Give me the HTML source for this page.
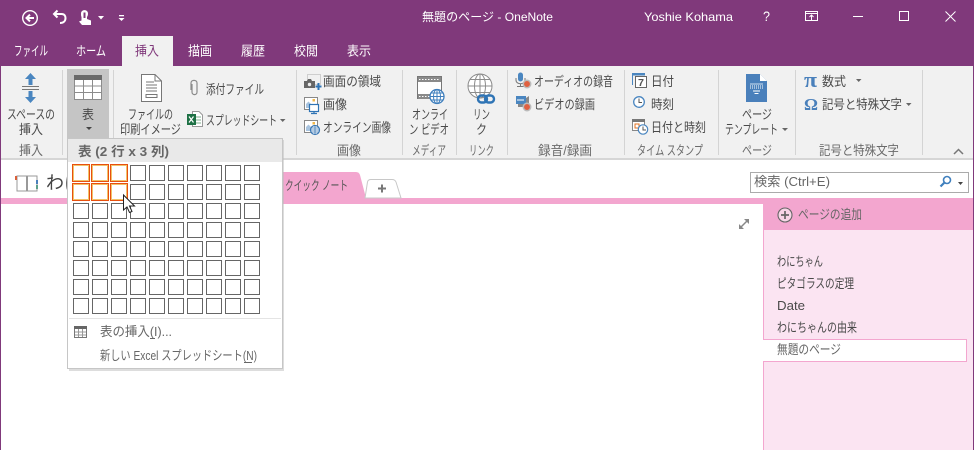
<!DOCTYPE html>
<html lang="ja"><head><meta charset="utf-8"><title>OneNote</title>
<style>
html,body{margin:0;padding:0;background:#fff;width:974px;height:450px;overflow:hidden}
svg{display:block}
text{font-family:"Liberation Sans","Noto Sans CJK JP",sans-serif;font-size:13px;fill:#4a4a4a}
.t{fill:#fff}
.g{fill:#6a6a6a}
.l{font-size:12px}
</style></head><body>
<svg width="974" height="450" viewBox="0 0 974 450" xmlns="http://www.w3.org/2000/svg">
<defs>
<g id="row" fill="#fff" stroke="#666" stroke-width="1">
<rect x="73.500" y=".5" width="15" height="15"/><rect x="92.500" y=".5" width="15" height="15"/><rect x="111.500" y=".5" width="15" height="15"/><rect x="130.500" y=".5" width="15" height="15"/><rect x="149.500" y=".5" width="15" height="15"/><rect x="168.500" y=".5" width="15" height="15"/><rect x="187.500" y=".5" width="15" height="15"/><rect x="206.500" y=".5" width="15" height="15"/><rect x="225.500" y=".5" width="15" height="15"/><rect x="244.500" y=".5" width="15" height="15"/>
</g>
</defs>
<rect width="974" height="450" fill="#fff"/>
<rect width="974" height="66" fill="#80397b"/>
<rect x="0" y="66" width="974" height="93" fill="#f1f1f1"/>
<rect x="0" y="158" width="974" height="2" fill="#d6d6d6"/>
<rect x="122" y="36" width="51" height="31" fill="#f1f1f1"/>
<rect x="0" y="0" width="1" height="450" fill="#80397b"/>
<rect x="973" y="0" width="1" height="450" fill="#80397b"/>

<!-- QAT -->
<circle cx="30" cy="18" r="7.3" fill="none" stroke="#fff" stroke-width="1.4"/>
<path d="M34 18H27M30 14.6L26.5 18L30 21.4" fill="none" stroke="#fff" stroke-width="2"/>
<path d="M54 14H61.5C64.5 14 65.5 16 65.5 18C65.5 21 63.5 23 60 23M57.5 10.5L54 14L57.5 17.5" fill="none" stroke="#fff" stroke-width="2"/>
<path d="M81 13.5C81 9 88 9 88 13.5C88 15.5 87.5 16 87 17V19L91 20.5V25H82L79 21.5L81.5 20.5V17C81 16 81 15 81 13.5Z" fill="#fff"/>
<path d="M83.5 12.500H85.500V18H83.500Z" fill="#80397b"/>
<path d="M98 16H104L101 19.500Z" fill="#fff"/>
<rect x="119" y="15" width="5" height="1.300" fill="#fff"/><path d="M118.500 18H124.500L121.500 21Z" fill="#fff"/>

<!-- Title bar -->
<text class="t l" x="422" y="21" textLength="131" lengthAdjust="spacingAndGlyphs">無題のページ - OneNote</text>
<text class="t l" x="644" y="21" textLength="89" lengthAdjust="spacingAndGlyphs">Yoshie Kohama</text>
<text class="t" x="763" y="21" textLength="7" lengthAdjust="spacingAndGlyphs" style="font-size:14px">?</text>
<rect x="805.500" y="11.500" width="12" height="9" fill="none" stroke="#fff"/>
<path d="M805 13.500H818M811.500 20V15M809.500 17L811.500 15L813.500 17" fill="none" stroke="#fff"/>
<rect x="853" y="16" width="10" height="1" fill="#fff"/>
<rect x="899.500" y="11.500" width="9" height="9" fill="none" stroke="#fff" stroke-width="1"/>
<path d="M945.500 11.500L955.500 21.500M955.500 11.500L945.500 21.500" stroke="#fff" fill="none"/>

<!-- Tabs -->
<text class="t" x="14" y="55.500" textLength="34" lengthAdjust="spacingAndGlyphs">ファイル</text>
<text class="t" x="76" y="55.500" textLength="30" lengthAdjust="spacingAndGlyphs">ホーム</text>
<text x="135" y="55.500" textLength="24" lengthAdjust="spacingAndGlyphs" style="fill:#80397b">挿入</text>
<text class="t" x="188" y="55.500" textLength="24" lengthAdjust="spacingAndGlyphs">描画</text>
<text class="t" x="241" y="55.500" textLength="24" lengthAdjust="spacingAndGlyphs">履歴</text>
<text class="t" x="294" y="55.500" textLength="24" lengthAdjust="spacingAndGlyphs">校閲</text>
<text class="t" x="347" y="55.500" textLength="24" lengthAdjust="spacingAndGlyphs">表示</text>

<!-- Ribbon separators -->
<g fill="#d4d4d4">
<rect x="62" y="70" width="1" height="85"/><rect x="113" y="70" width="1" height="85"/>
<rect x="296" y="70" width="1" height="85"/><rect x="402" y="70" width="1" height="85"/>
<rect x="456" y="70" width="1" height="85"/><rect x="507" y="70" width="1" height="85"/>
<rect x="624" y="70" width="1" height="85"/><rect x="718" y="70" width="1" height="85"/>
<rect x="795" y="70" width="1" height="85"/><rect x="922" y="70" width="1" height="85"/>
</g>

<!-- Group labels -->
<text class="g" x="19" y="155" textLength="24" lengthAdjust="spacingAndGlyphs">挿入</text>
<text class="g" x="337" y="155" textLength="24" lengthAdjust="spacingAndGlyphs">画像</text>
<text class="g" x="412" y="155" textLength="34" lengthAdjust="spacingAndGlyphs">メディア</text>
<text class="g" x="469" y="155" textLength="25" lengthAdjust="spacingAndGlyphs">リンク</text>
<text class="g" x="538" y="155" textLength="54" lengthAdjust="spacingAndGlyphs">録音/録画</text>
<text class="g" x="637" y="155" textLength="66" lengthAdjust="spacingAndGlyphs">タイム スタンプ</text>
<text class="g" x="742" y="155" textLength="30" lengthAdjust="spacingAndGlyphs">ページ</text>
<text class="g" x="819" y="155" textLength="80" lengthAdjust="spacingAndGlyphs">記号と特殊文字</text>
<path d="M954 154L958.500 149.500L963 154" fill="none" stroke="#777" stroke-width="1.500"/>

<!-- Space -->
<path d="M30.500 73L36 79H32.500V85H28.500V79H25Z" fill="#4a86c0"/>
<path d="M30.500 103L36 97H32.500V91H28.500V97H25Z" fill="#4a86c0"/>
<rect x="22" y="86" width="17" height="1" fill="#777"/><rect x="22" y="89" width="17" height="1" fill="#777"/>
<text x="7" y="119" textLength="48" lengthAdjust="spacingAndGlyphs">スペースの</text>
<text x="19" y="134" textLength="24" lengthAdjust="spacingAndGlyphs">挿入</text>

<!-- Table button -->
<rect x="67" y="69" width="42" height="70" fill="#c5c5c5"/>
<rect x="74" y="75" width="28" height="25" fill="#fff"/>
<rect x="74" y="75" width="28" height="5" fill="#6a6a6a"/>
<path d="M74.500 80V99.500H101.500V80M74 86H102M74 92.500H102M83.500 80V100M92.500 80V100" fill="none" stroke="#8c8c8c"/>
<text x="82" y="119" textLength="12" lengthAdjust="spacingAndGlyphs">表</text>
<path d="M86 127H92L89 130Z" fill="#444"/>

<!-- File printout -->
<path d="M141.500 74.500H155L161.500 81V101.500H141.500Z" fill="#fff" stroke="#777"/>
<path d="M155 74.500V81H161.500" fill="none" stroke="#777"/>
<path d="M146 82H154M146 85H157M146 88H157M146 91H157" stroke="#777"/>
<rect x="146" y="94.500" width="11" height="3" fill="#fff" stroke="#777"/>
<text x="128" y="119" textLength="45" lengthAdjust="spacingAndGlyphs">ファイルの</text>
<text x="120" y="134" textLength="61" lengthAdjust="spacingAndGlyphs">印刷イメージ</text>

<!-- Attach -->
<path d="M192 84V92C192 95.500 197 95.500 197 92V83C197 79.500 191 79.500 191 83V90" fill="none" stroke="#8a8a8a" stroke-width="1.200"/>
<text x="206" y="94" textLength="58" lengthAdjust="spacingAndGlyphs">添付ファイル</text>

<!-- Spreadsheet -->
<path d="M192.500 111.500H199L202.500 115V126.500H192.500Z" fill="#fff" stroke="#999"/>
<path d="M196 117H201M196 120H201M196 123H201" stroke="#7fb08f"/>
<rect x="187" y="114" width="9" height="11" fill="#1e7145"/>
<path d="M189 116.500L193.500 122.500M193.500 116.500L189 122.500" stroke="#fff" stroke-width="1.200"/>
<text x="206" y="125" textLength="71" lengthAdjust="spacingAndGlyphs">スプレッドシート</text>
<path d="M280 119H285.500L282.700 122Z" fill="#666"/>

<!-- Images group -->
<rect x="307.500" y="74.500" width="13" height="10" fill="none" stroke="#aaa" stroke-dasharray="1 1"/>
<path d="M304 81H307L308 79H311L312 81H315V88H304Z" fill="#666"/>
<circle cx="309.500" cy="84.500" r="1.700" fill="#eee"/>
<path d="M318.500 83V90M315.500 86.500H321.500" stroke="#2f74b5" stroke-width="2" fill="none"/>
<rect x="304.500" y="97.500" width="13" height="12" fill="#fff" stroke="#888"/>
<path d="M306 108V104L308.500 101.500L311 104V108Z" fill="#a9c4df"/>
<rect x="312.500" y="99" width="2.500" height="2.500" fill="#f2b84b"/>
<rect x="309.500" y="104.500" width="9" height="7" fill="#fff" stroke="#2f74b5" stroke-width="1.200"/>
<path d="M314 111.500V113M311 113.500H317" stroke="#2f74b5" stroke-width="1.200"/>
<rect x="304.500" y="120.500" width="13" height="12" fill="#fff" stroke="#888"/>
<path d="M306 131V127L308.500 124.500L311 127V131Z" fill="#a9c4df"/>
<rect x="312.500" y="122" width="2.500" height="2.500" fill="#f2b84b"/>
<circle cx="315" cy="130" r="4.500" fill="#fff" stroke="#3b78b5" stroke-width="1.200"/>
<path d="M310.500 130H319.500M315 125.500V134.500M311 128H319M311 132H319" stroke="#3b78b5" stroke-width=".8"/>
<text x="323" y="86" textLength="58" lengthAdjust="spacingAndGlyphs">画面の領域</text>
<text x="323" y="109" textLength="24" lengthAdjust="spacingAndGlyphs">画像</text>
<text x="323" y="132" textLength="68" lengthAdjust="spacingAndGlyphs">オンライン画像</text>

<!-- Video -->
<rect x="417.500" y="76.500" width="24" height="22" fill="#fff" stroke="#777"/>
<rect x="418" y="77" width="23" height="5" fill="#8a8a8a"/><rect x="418" y="94" width="23" height="5" fill="#8a8a8a"/>
<path d="M419 79.500H440M419 96.500H440" stroke="#fff" stroke-dasharray="1.500 1.500"/>
<circle cx="437" cy="96.500" r="7" fill="#fff" stroke="#3f7fbd" stroke-width="1.300"/>
<path d="M430 96.500H444M437 89.500V103.500M431.500 93H442.500M431.500 100H442.500" stroke="#3f7fbd"/>
<ellipse cx="437" cy="96.500" rx="3.500" ry="7" fill="none" stroke="#3f7fbd"/>
<text x="412" y="119" textLength="36" lengthAdjust="spacingAndGlyphs">オンライ</text>
<text x="409" y="134" textLength="40" lengthAdjust="spacingAndGlyphs">ン ビデオ</text>

<!-- Link -->
<circle cx="480" cy="86" r="12" fill="#fff" stroke="#8c8c8c"/>
<ellipse cx="480" cy="86" rx="5.500" ry="12" fill="none" stroke="#8c8c8c"/>
<path d="M480 74V98M468 86H492M470 79.500H490M470 92.500H490" stroke="#8c8c8c"/>
<rect x="478" y="95.500" width="9" height="7" rx="3.500" fill="none" stroke="#2f74b5" stroke-width="2.400"/>
<rect x="485" y="95.500" width="9" height="7" rx="3.500" fill="none" stroke="#2f74b5" stroke-width="2.400"/>
<text x="473" y="119" textLength="17" lengthAdjust="spacingAndGlyphs">リン</text>
<text x="476" y="134" textLength="11" lengthAdjust="spacingAndGlyphs">ク</text>

<!-- Audio/video -->
<rect x="518" y="72.500" width="5" height="9" rx="2.500" fill="#4a86c0"/>
<path d="M516 78V80C516 85 525 85 525 80V78M520.500 84V86M517 86.500H524" fill="none" stroke="#777"/>
<circle cx="527" cy="84" r="3.700" fill="#e06040" stroke="#bbb" stroke-width="1.500"/>
<rect x="516" y="96" width="10" height="8" fill="#4a86c0"/>
<path d="M517 100H524" stroke="#fff"/>
<path d="M526 98L529 96V104H526Z" fill="#888"/>
<rect x="518" y="104" width="6" height="3" fill="#888"/>
<circle cx="527" cy="107" r="3.700" fill="#e06040" stroke="#bbb" stroke-width="1.500"/>
<text x="534" y="86" textLength="79" lengthAdjust="spacingAndGlyphs">オーディオの録音</text>
<text x="534" y="109" textLength="61" lengthAdjust="spacingAndGlyphs">ビデオの録画</text>

<!-- Date/time -->
<path d="M632.500 85V73.500H644" fill="none" stroke="#4a86c0"/>
<rect x="632" y="73" width="13" height="2.500" fill="#4a86c0"/>
<rect x="635.500" y="76.500" width="11" height="11" fill="#fff" stroke="#666"/>
<text x="638" y="86" textLength="6" lengthAdjust="spacingAndGlyphs" style="font-size:10px;font-weight:bold;fill:#555">7</text>
<circle cx="639" cy="102" r="5.300" fill="#fff" stroke="#4a86c0" stroke-width="1.300"/>
<path d="M639 98.500V102.500H642" fill="none" stroke="#555"/>
<rect x="632.500" y="119.500" width="12" height="11" fill="#fff" stroke="#888"/>
<rect x="632" y="119" width="13" height="3" fill="#777"/>
<rect x="635" y="124" width="4" height="4" fill="#fff" stroke="#e07020"/>
<circle cx="643" cy="129.500" r="4.700" fill="#fff" stroke="#4a86c0" stroke-width="1.200"/>
<path d="M643 126.500V130H646" fill="none" stroke="#555"/>
<text x="651" y="86" textLength="23" lengthAdjust="spacingAndGlyphs">日付</text>
<text x="651" y="109" textLength="23" lengthAdjust="spacingAndGlyphs">時刻</text>
<text x="651" y="132" textLength="55" lengthAdjust="spacingAndGlyphs">日付と時刻</text>

<!-- Page template -->
<path d="M746 74H760L767 81V102H746Z" fill="#4a80bb"/>
<path d="M760 74V81H767Z" fill="#fff"/>
<path d="M750 84H763" stroke="#cfe0f0"/>
<path d="M750 86H763M750 88H763" stroke="#fff" stroke-dasharray="1 1"/>
<path d="M753 91H760M754.500 93.500H758.500" stroke="#fff"/>
<text x="742" y="119" textLength="30" lengthAdjust="spacingAndGlyphs">ページ</text>
<text x="725" y="134" textLength="53" lengthAdjust="spacingAndGlyphs">テンプレート</text>
<path d="M782 128H788L785 131Z" fill="#666"/>

<!-- Symbols -->
<text x="804" y="87" textLength="13" lengthAdjust="spacingAndGlyphs" style="font-family:'Liberation Serif',serif;font-size:22px;font-weight:bold;fill:#4a80bb">π</text>
<text x="804" y="110" textLength="14" lengthAdjust="spacingAndGlyphs" style="font-family:'Liberation Serif',serif;font-size:17px;font-weight:bold;fill:#4a80bb">Ω</text>
<text x="822" y="86" textLength="24" lengthAdjust="spacingAndGlyphs">数式</text>
<path d="M856 79H861.500L858.700 82Z" fill="#666"/>
<text x="822" y="109" textLength="80" lengthAdjust="spacingAndGlyphs">記号と特殊文字</text>
<path d="M906 103H911.500L908.700 106Z" fill="#666"/>

<!-- Notebook bar -->
<rect x="1" y="198" width="762" height="6" fill="#f3a6cf"/>
<path d="M17 176H26.500V191H17ZM27.500 176H37V191H27.500Z" fill="#fff" stroke="#999"/>
<rect x="15" y="176" width="2" height="4" fill="#d9603a"/>
<rect x="36" y="180" width="2" height="4" fill="#4a80bb"/><rect x="36" y="185" width="2" height="4" fill="#5ca08a"/>
<text x="46" y="189" textLength="90" lengthAdjust="spacingAndGlyphs" style="font-size:18px;fill:#444">わにちゃん</text>

<path d="M283 172H356Q359 172 360 175L366 198H283Z" fill="#f3a6cf"/>
<text x="285" y="190" textLength="63" lengthAdjust="spacingAndGlyphs" style="fill:#555">クイック ノート</text>
<path d="M365 198L367.500 182Q368 179.500 371 179.500H392Q395 179.500 396 182L401 198Z" fill="#fff" stroke="#c8c8c8"/>
<path d="M378 188.500H386M382 184.500V192.500" stroke="#777" stroke-width="2"/>

<!-- Search -->
<rect x="750.500" y="172.500" width="218" height="20" fill="#fff" stroke="#ababab"/>
<text x="754" y="186" textLength="76" lengthAdjust="spacingAndGlyphs" style="fill:#666">検索 (Ctrl+E)</text>
<circle cx="947" cy="180" r="3.500" fill="none" stroke="#3f7fbd" stroke-width="1.600"/>
<path d="M944.500 182.500L940.500 186.500" stroke="#3f7fbd" stroke-width="2.200"/>
<path d="M958 182H963L960.500 185Z" fill="#444"/>

<!-- Expand icon -->
<path d="M740 228L748 220" stroke="#888" stroke-width="1.500"/>
<path d="M739 224V229H744ZM749 224V219H744Z" fill="#888"/>

<!-- Page pane -->
<rect x="763" y="204" width="210" height="246" fill="#fbe4f2"/>
<rect x="763" y="198" width="210" height="32" fill="#f3a6cf"/>
<rect x="763" y="230" width="1" height="220" fill="#f3a6cf"/>
<circle cx="785" cy="215" r="7" fill="#f7d5e7" stroke="#666" stroke-width="1.100"/>
<path d="M781 215H789M785 211V219" stroke="#666" stroke-width="1.700"/>
<text x="798" y="219" textLength="64" lengthAdjust="spacingAndGlyphs" style="fill:#666">ページの追加</text>
<text x="777" y="266" textLength="46" lengthAdjust="spacingAndGlyphs">わにちゃん</text>
<text x="777" y="288" textLength="77" lengthAdjust="spacingAndGlyphs">ピタゴラスの定理</text>
<text x="777" y="310" textLength="28" lengthAdjust="spacingAndGlyphs">Date</text>
<text x="777" y="332" textLength="80" lengthAdjust="spacingAndGlyphs">わにちゃんの由来</text>
<path d="M763.500 339.500H966.500V361.500H763.500" fill="#fff" stroke="#f3a6cf"/>
<rect x="763" y="340" width="2" height="21" fill="#fff"/>
<text x="777" y="354" textLength="64" lengthAdjust="spacingAndGlyphs" style="fill:#666">無題のページ</text>

<!-- Dropdown -->
<rect x="69" y="140" width="215" height="231" fill="#bbb" opacity=".5"/>
<rect x="67.500" y="138.500" width="215" height="230" fill="#fff" stroke="#c6c6c6"/>
<rect x="68" y="139" width="214" height="23" fill="#e9e9e9"/>
<text x="78" y="156" textLength="91" lengthAdjust="spacingAndGlyphs" style="font-weight:bold;fill:#666">表 (2 行 x 3 列)</text>
<use href="#row" y="165"/><use href="#row" y="184"/><use href="#row" y="203"/><use href="#row" y="222"/>
<use href="#row" y="241"/><use href="#row" y="260"/><use href="#row" y="279"/><use href="#row" y="298"/>
<!-- selected cells -->
<g fill="#fff" stroke="#f0c36a" stroke-width="1">
<rect x="73.500" y="165.500" width="15" height="15"/><rect x="92.500" y="165.500" width="15" height="15"/><rect x="111.500" y="165.500" width="15" height="15"/>
<rect x="73.500" y="184.500" width="15" height="15"/><rect x="92.500" y="184.500" width="15" height="15"/><rect x="111.500" y="184.500" width="15" height="15"/>
</g>
<g fill="none" stroke="#e8500f" stroke-width="1">
<rect x="72.500" y="164.500" width="17" height="17"/><rect x="91.500" y="164.500" width="17" height="17"/><rect x="110.500" y="164.500" width="17" height="17"/>
<rect x="72.500" y="183.500" width="17" height="17"/><rect x="91.500" y="183.500" width="17" height="17"/><rect x="110.500" y="183.500" width="17" height="17"/>
</g>
<rect x="69" y="318" width="212" height="1" fill="#e4e4e4"/>
<rect x="74.500" y="326.500" width="12" height="11" fill="#fff" stroke="#777"/>
<rect x="74" y="326" width="13" height="3" fill="#666"/>
<path d="M78.500 329V337M82.500 329V337M75 332H86M75 335H86" stroke="#999"/>
<text x="100" y="336" textLength="72" lengthAdjust="spacingAndGlyphs" style="fill:#666">表の挿入(I)...</text>
<rect x="150" y="338" width="5" height="1" fill="#666"/>
<text x="100" y="360" textLength="157" lengthAdjust="spacingAndGlyphs" style="fill:#666">新しい Excel スプレッドシート(N)</text>
<rect x="244" y="362" width="8" height="1" fill="#666"/>

<!-- Cursor -->
<path d="M123.500 195V210L127 207L129.500 212.500L132 211.500L129.500 206H134.500Z" fill="#fff" stroke="#222" stroke-width="1"/>
</svg>
</body></html>
